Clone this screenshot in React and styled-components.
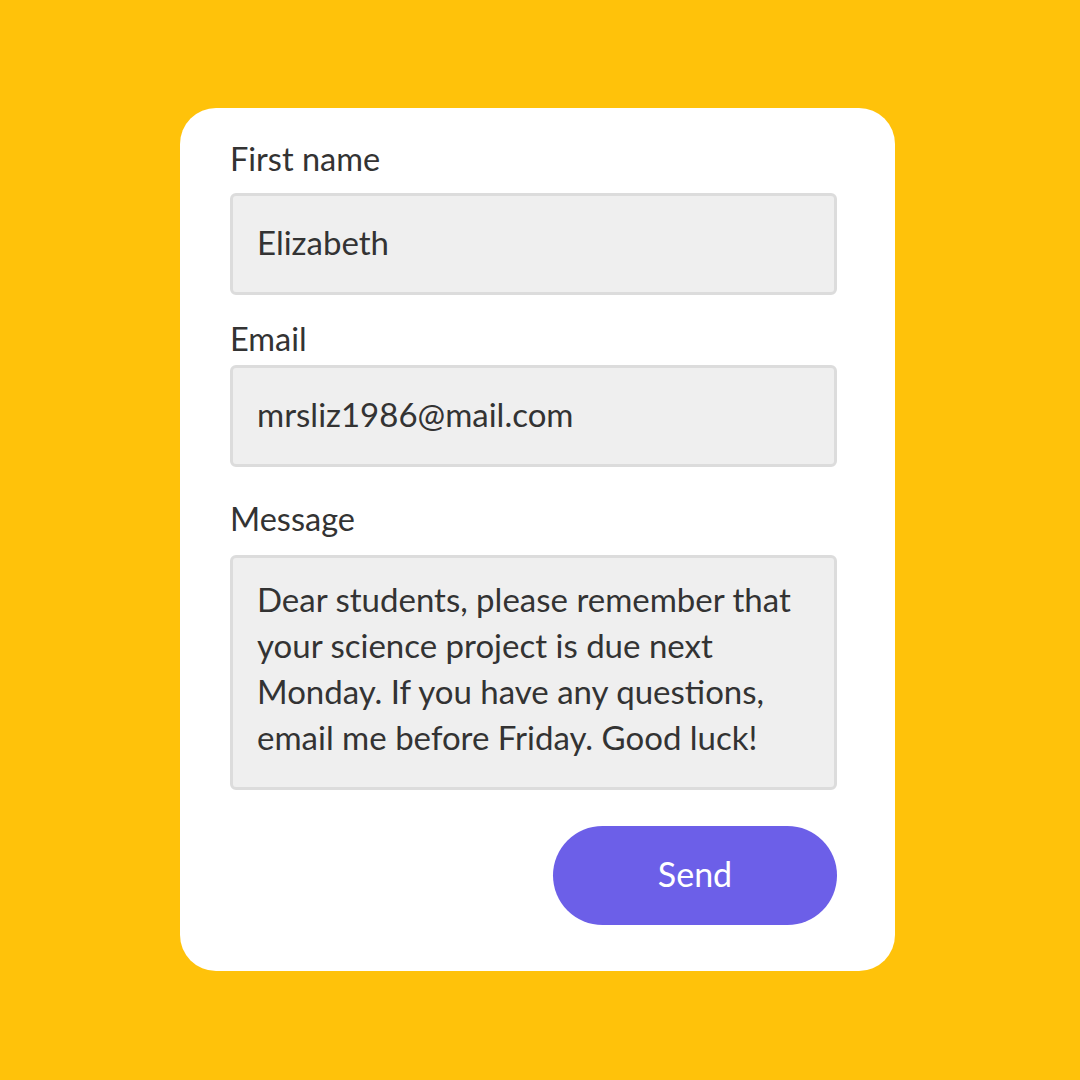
import React from "react";
import styled, { createGlobalStyle } from "styled-components";

const Global = createGlobalStyle`
  html, body { margin: 0; padding: 0; }
  body { background: #FFC20A; font-family: "Lato", "Noto Sans", sans-serif; }
`;

const Page = styled.div`
  width: 1080px;
  height: 1080px;
  display: flex;
  justify-content: flex-start;
  align-items: flex-start;
  padding: 108px 0 0 180px;
  box-sizing: border-box;
`;

const Card = styled.form`
  width: 715px;
  height: 863px;
  box-sizing: border-box;
  background: #fff;
  border-radius: 36px;
  padding: 0 58px 0 50px;
  display: flex;
  flex-direction: column;
`;

const Label = styled.label`
  display: block;
  font-size: 32.5px;
  line-height: 36px;
  color: #333;
  margin-top: ${(p) => p.$top}px;
  margin-bottom: ${(p) => p.$bottom}px;
`;

const Field = styled.div`
  box-sizing: border-box;
  height: ${(p) => p.$h}px;
  background: #efefef;
  border: 3px solid #dcdcdc;
  border-radius: 6px;
  padding: ${(p) => (p.$multi ? "18px 20px 0 24px" : "0 20px 4px 24px")};
  display: flex;
  align-items: ${(p) => (p.$multi ? "flex-start" : "center")};
  font-size: 33px;
  line-height: 46px;
  color: #333;
`;

const Actions = styled.div`
  display: flex;
  justify-content: flex-end;
  margin-top: 36px;
`;

const Button = styled.button`
  width: 284px;
  height: 99px;
  border: none;
  border-radius: 50px;
  background: #6C5FE8;
  color: #fff;
  font-family: inherit;
  font-size: 34px;
  padding: 0 0 5px;
  cursor: pointer;
`;

export default function App() {
  return (
    <>
      <Global />
      <Page>
        <Card>
          <Label $top={33} $bottom={16}>First name</Label>
          <Field $h={102}>Elizabeth</Field>
          <Label $top={26} $bottom={8}>Email</Label>
          <Field $h={102}>mrsliz1986@mail.com</Field>
          <Label $top={34} $bottom={18}>Message</Label>
          <Field $h={235} $multi>
            Dear students, please remember that your science project is due next Monday. If you have any questions, email me before Friday. Good luck!
          </Field>
          <Actions>
            <Button type="button">Send</Button>
          </Actions>
        </Card>
      </Page>
    </>
  );
}
